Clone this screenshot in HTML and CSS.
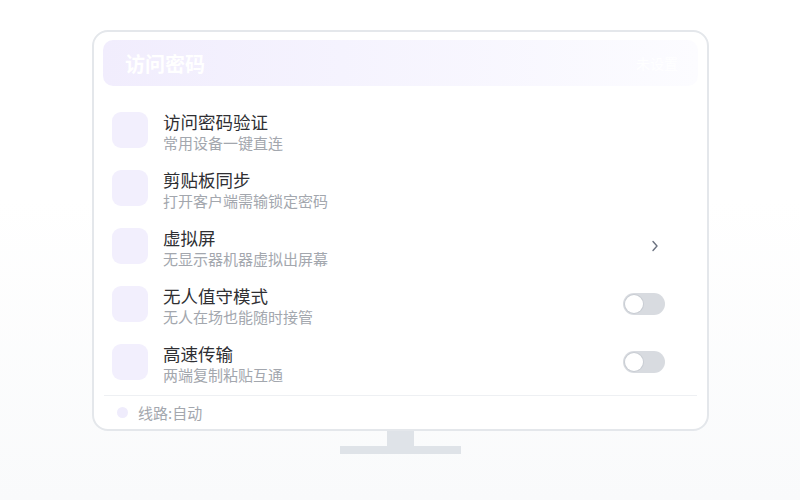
FILE: index.html
```html
<!DOCTYPE html>
<html lang="zh-CN">
<head>
<meta charset="utf-8">
<link rel="stylesheet" href="styles.css">
</head>
<body>
<div class="stage">
  <div class="monitor">
    <div class="header">
      <span class="header-title">访问密码</span>
      <span class="header-extra">未设置</span>
    </div>
    <div class="list">
      <div class="row">
        <div class="icon"></div>
        <div class="text">
          <div class="title">访问密码验证</div>
          <div class="sub">常用设备一键直连</div>
        </div>
      </div>
      <div class="row">
        <div class="icon"></div>
        <div class="text">
          <div class="title">剪贴板同步</div>
          <div class="sub">打开客户端需输锁定密码</div>
        </div>
      </div>
      <div class="row">
        <div class="icon"></div>
        <div class="text">
          <div class="title">虚拟屏</div>
          <div class="sub">无显示器机器虚拟出屏幕</div>
        </div>
        <div class="ctrl">
          <svg class="chev" width="8" height="12" viewBox="0 0 8 12"><path d="M2 1.5 L6 6 L2 10.5" fill="none" stroke="#6b7280" stroke-width="1.4" stroke-linecap="round" stroke-linejoin="round"/></svg>
        </div>
      </div>
      <div class="row">
        <div class="icon"></div>
        <div class="text">
          <div class="title">无人值守模式</div>
          <div class="sub">无人在场也能随时接管</div>
        </div>
        <div class="ctrl"><span class="toggle"><span class="knob"></span></span></div>
      </div>
      <div class="row">
        <div class="icon"></div>
        <div class="text">
          <div class="title">高速传输</div>
          <div class="sub">两端复制粘贴互通</div>
        </div>
        <div class="ctrl"><span class="toggle"><span class="knob"></span></span></div>
      </div>
    </div>
    <div class="divider"></div>
    <div class="footer">
      <span class="dot"></span>
      <span class="footer-text">线路:自动</span>
    </div>
  </div>
  <div class="neck"></div>
  <div class="base"></div>
</div>
</body>
</html>
```
FILE: styles.css
```css
html, body {
  margin: 0;
  padding: 0;
}
body {
  width: 800px;
  height: 500px;
  overflow: hidden;
  background: linear-gradient(to bottom, #ffffff 0%, #ffffff 40%, #f9fafb 100%);
  font-family: "Noto Sans CJK SC", "Noto Sans", sans-serif;
}
.stage {
  display: flex;
  flex-direction: column;
  align-items: center;
  padding-top: 30px;
  padding-left: 1px;
}
.monitor {
  box-sizing: border-box;
  width: 617px;
  height: 401px;
  border: 2px solid #e4e7eb;
  border-radius: 16px;
  background: #ffffff;
  padding: 8px 9px 0 9px;
  display: flex;
  flex-direction: column;
}
.header {
  height: 46px;
  border-radius: 10px;
  background: linear-gradient(to right, #f1edfd 0%, #f5f3fe 40%, #fcfcff 100%);
  display: flex;
  align-items: center;
  justify-content: space-between;
  padding: 0 20px 0 22px;
}
.header-title {
  color: #ffffff;
  font-size: 20px;
  font-weight: 700;
}
.header-extra {
  color: #ffffff;
  font-size: 14px;
}
.list {
  margin-top: 15px;
  display: flex;
  flex-direction: column;
}
.row {
  height: 58px;
  display: flex;
  align-items: flex-start;
  padding: 0 33px 0 9px;
}
.icon {
  width: 36px;
  height: 36px;
  border-radius: 9px;
  background: #f2effd;
  margin-top: 11px;
  flex: none;
}
.text {
  margin-left: 15px;
  padding-top: 9px;
  flex: 1;
}
.title {
  font-size: 17.5px;
  line-height: 23px;
  color: #2f2f33;
}
.sub {
  font-size: 15px;
  line-height: 20px;
  color: #a3a7ae;
}
.ctrl {
  height: 58px;
  display: flex;
  align-items: center;
}
.chev {
  display: block;
  margin-right: 6px;
}
.toggle {
  display: block;
  box-sizing: border-box;
  width: 42px;
  height: 22px;
  border-radius: 11px;
  background: #d8dbe0;
  position: relative;
}
.knob {
  position: absolute;
  left: 2px;
  top: 2px;
  width: 18px;
  height: 18px;
  border-radius: 50%;
  background: #ffffff;
  box-shadow: 0 0 0 1px #c9cdd3;
}
.divider {
  height: 1px;
  background: #eef0f3;
  margin: 4px 1px 0 1px;
}
.footer {
  flex: 1;
  display: flex;
  align-items: center;
  padding-left: 14px;
}
.dot {
  width: 11px;
  height: 11px;
  border-radius: 50%;
  background: #efecfc;
}
.footer-text {
  margin-left: 10px;
  font-size: 15px;
  color: #a3a7ae;
}
.neck {
  width: 27px;
  height: 15px;
  background: #dfe3e8;
}
.base {
  width: 121px;
  height: 8px;
  background: #dfe3e8;
}
```
